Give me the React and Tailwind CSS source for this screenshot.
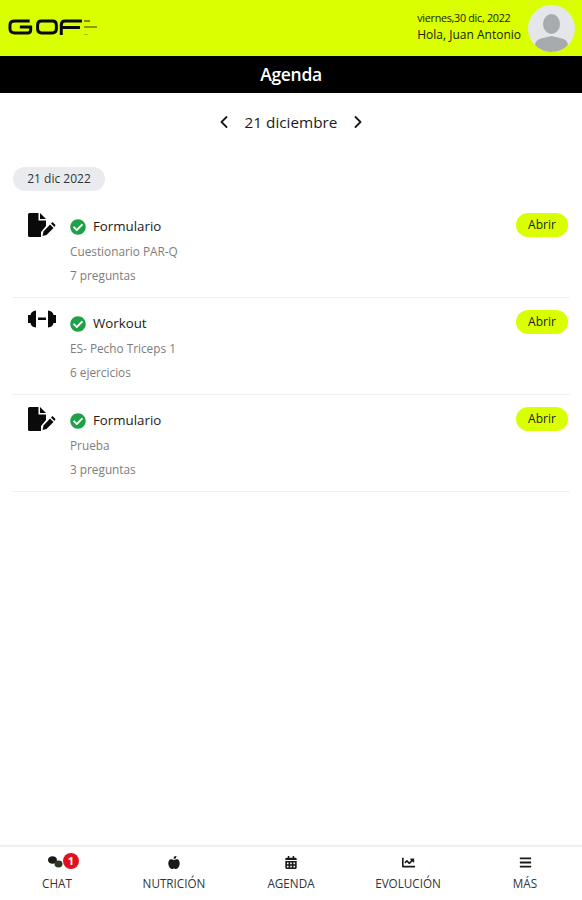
import { FaCheckCircle, FaAppleAlt, FaCalendarAlt, FaChartLine, FaBars } from "react-icons/fa"
import { ChevronLeft, ChevronRight } from "lucide-react"

const FormIcon = () => (
  <svg width="28" height="24" viewBox="0 0 28 24" fill="#0a0a0a">
    <path d="M0 1.500Q0 0 1.500 0H10.500V7.500H18V13L13 19V24H1.500Q0 24 0 22.500Z" />
    <path d="M12 0L18 6H12Z" />
    <path d="M14.500 23L15.500 18.500L22 11.500L25.500 15L18.500 22Z" />
    <path d="M23 10.500L24.500 9L27.500 12L26.500 14Z" />
  </svg>
)

const DumbbellIcon = () => (
  <svg width="28" height="18" viewBox="0 0 28 18" fill="#0a0a0a">
    <path d="M8 0.500V17.500Q3 17 2.500 13H0V5H2.500Q3 1 8 0.500Z" />
    <path d="M20 0.500V17.500Q25 17 25.500 13H28V5H25.500Q25 1 20 0.500Z" />
    <rect x="10" y="7.500" width="8" height="2.500" />
  </svg>
)

const ChatIcon = ({ className }) => (
  <svg className={className} viewBox="0 0 15 12" fill="#1a1a1a">
    <ellipse cx="4.500" cy="4" rx="4.500" ry="3.800" />
    <ellipse cx="10.500" cy="8" rx="4" ry="3.400" fill="#2a3a20" />
  </svg>
)

const items = [
  { icon: "form", title: "Formulario", sub: "Cuestionario PAR-Q", count: "7 preguntas" },
  { icon: "workout", title: "Workout", sub: "ES- Pecho Triceps 1", count: "6 ejercicios" },
  { icon: "form", title: "Formulario", sub: "Prueba", count: "3 preguntas" },
]

const navItems = [
  { name: "CHAT", Icon: ChatIcon, badge: 1, size: "w-[15px] h-[12px] ml-[-3px]" },
  { name: "NUTRICIÓN", Icon: FaAppleAlt, size: "w-[12px] h-[13px]" },
  { name: "AGENDA", Icon: FaCalendarAlt, size: "w-[12px] h-[13px]" },
  { name: "EVOLUCIÓN", Icon: FaChartLine, size: "w-[13px] h-[13px]" },
  { name: "MÁS", Icon: FaBars, size: "w-[13px] h-[13px]" },
]

const Logo = () => (
  <div className="flex items-start gap-[2px] mt-[-2px]">
    <svg width="74" height="16" viewBox="0 0 75 16" fill="none" stroke="#0a0a0a" strokeWidth="3">
      <path d="M22 2H7Q2 2 2 6V10Q2 14 7 14H20Q23 14 23 11V8H12" />
      <path d="M34 2H45Q49 2 49 6V10Q49 14 45 14H34Q30 14 30 10V6Q30 2 34 2Z" />
      <path d="M54 16V6Q54 2 58 2H75M54 8.500H73" />
    </svg>
    <div className="flex flex-col gap-[4px] pt-[1px]">
      <div className="w-[6px] h-[2px] bg-[#7d8f10]" />
      <div className="w-[13px] h-[2px] bg-[#8a9c10]" />
      <div className="w-[4px] h-[1px] mt-[2px] bg-[#a5b80c]" />
    </div>
  </div>
)

const Avatar = () => (
  <div className="w-[47px] h-[47px] rounded-full bg-[#e4e6ea] overflow-hidden flex flex-col items-center pt-[9px]">
    <svg width="47" height="38" viewBox="0 0 47 38" fill="#a8abae">
      <ellipse cx="23.500" cy="10" rx="8.500" ry="10" />
      <path d="M7 38V32Q7 25 15 24L23.500 22L32 24Q40 25 40 32V38Z" />
    </svg>
  </div>
)

const AgendaRow = ({ item }) => (
  <div className="flex border-b border-[#f0f0f0] h-[97px] pl-[16px] pr-[2px]">
    <div className="w-[42px] shrink-0 pt-[12px]">
      {item.icon === "form" ? <FormIcon /> : <DumbbellIcon />}
    </div>
    <div className="flex-1 pt-[16px]">
      <div className="flex items-center gap-[7px] h-[20px]">
        <FaCheckCircle className="text-[#1fa14a] w-[16px] h-[16px] mt-[-1px]" />
        <span className="text-[13.300px] text-[#1a1a1a]">{item.title}</span>
      </div>
      <p className="text-[11.800px] text-[#7d7d7d] mt-[6px] leading-[16px]">{item.sub}</p>
      <p className="text-[11.800px] text-[#7d7d7d] mt-[8px] leading-[16px]">{item.count}</p>
    </div>
    <div className="pt-[10px]">
      <button className="w-[52px] h-[24px] rounded-full bg-[#d9ff00] text-[12px] text-[#1a1a1a]">Abrir</button>
    </div>
  </div>
)

export default function App() {
  return (
    <div className="flex flex-col h-[900px] bg-white overflow-hidden font-['Open_Sans',sans-serif]">
      {/* Top bar */}
      <header className="h-[56px] bg-[#d9ff00] flex items-center justify-between pl-[8px] pr-[7px]">
        <Logo />
        <div className="flex items-center gap-[7px]">
          <div className="flex flex-col text-[#1a2200]">
            <span className="text-[10.800px] leading-[14px] tracking-[-0.3px]">viernes,30 dic, 2022</span>
            <span className="text-[12px] leading-[20px]">Hola, Juan Antonio</span>
          </div>
          <Avatar />
        </div>
      </header>
      <div className="h-[37px] bg-black flex items-center justify-center text-white text-[17.500px] font-semibold tracking-[-0.3px]">
        Agenda
      </div>

      {/* Month selector */}
      <div className="flex items-center justify-center gap-[11px] mt-[14px] h-[30px] text-[#1a1a1a]">
        <ChevronLeft size={20} strokeWidth={2.200} />
        <span className="text-[15.300px]">21 diciembre</span>
        <ChevronRight size={20} strokeWidth={2.200} />
      </div>

      {/* List */}
      <main className="flex-1 px-[12px] pt-[30px]">
        <div className="ml-[1px] w-[92px] h-[24px] rounded-full bg-[#e9ebee] flex items-center justify-center text-[12px] text-[#333]">
          21 dic 2022
        </div>
        <div className="mt-[10px]">
          {items.map((item, index) => (
            <AgendaRow key={index} item={item} />
          ))}
        </div>
      </main>

      {/* Bottom nav */}
      <nav className="h-[55px] w-[585px] ml-[-1.500px] border-t-2 border-[#f0f0f0] grid grid-cols-5">
        {navItems.map(({ name, Icon, badge, size }) => (
          <div key={name} className="flex flex-col items-center pt-[8px]">
            <div className="relative h-[14px] flex items-center">
              <Icon className={`text-[#1a1a1a] ${size}`} />
              {badge && (
                <span className="absolute left-[12px] top-[-2px] w-[16px] h-[16px] rounded-full bg-[#e0101c] text-white text-[11px] font-bold flex items-center justify-center">
                  {badge}
                </span>
              )}
            </div>
            <span className="text-[11.700px] text-[#333] mt-[6px] leading-[16px]">{name}</span>
          </div>
        ))}
      </nav>
    </div>
  )
}
